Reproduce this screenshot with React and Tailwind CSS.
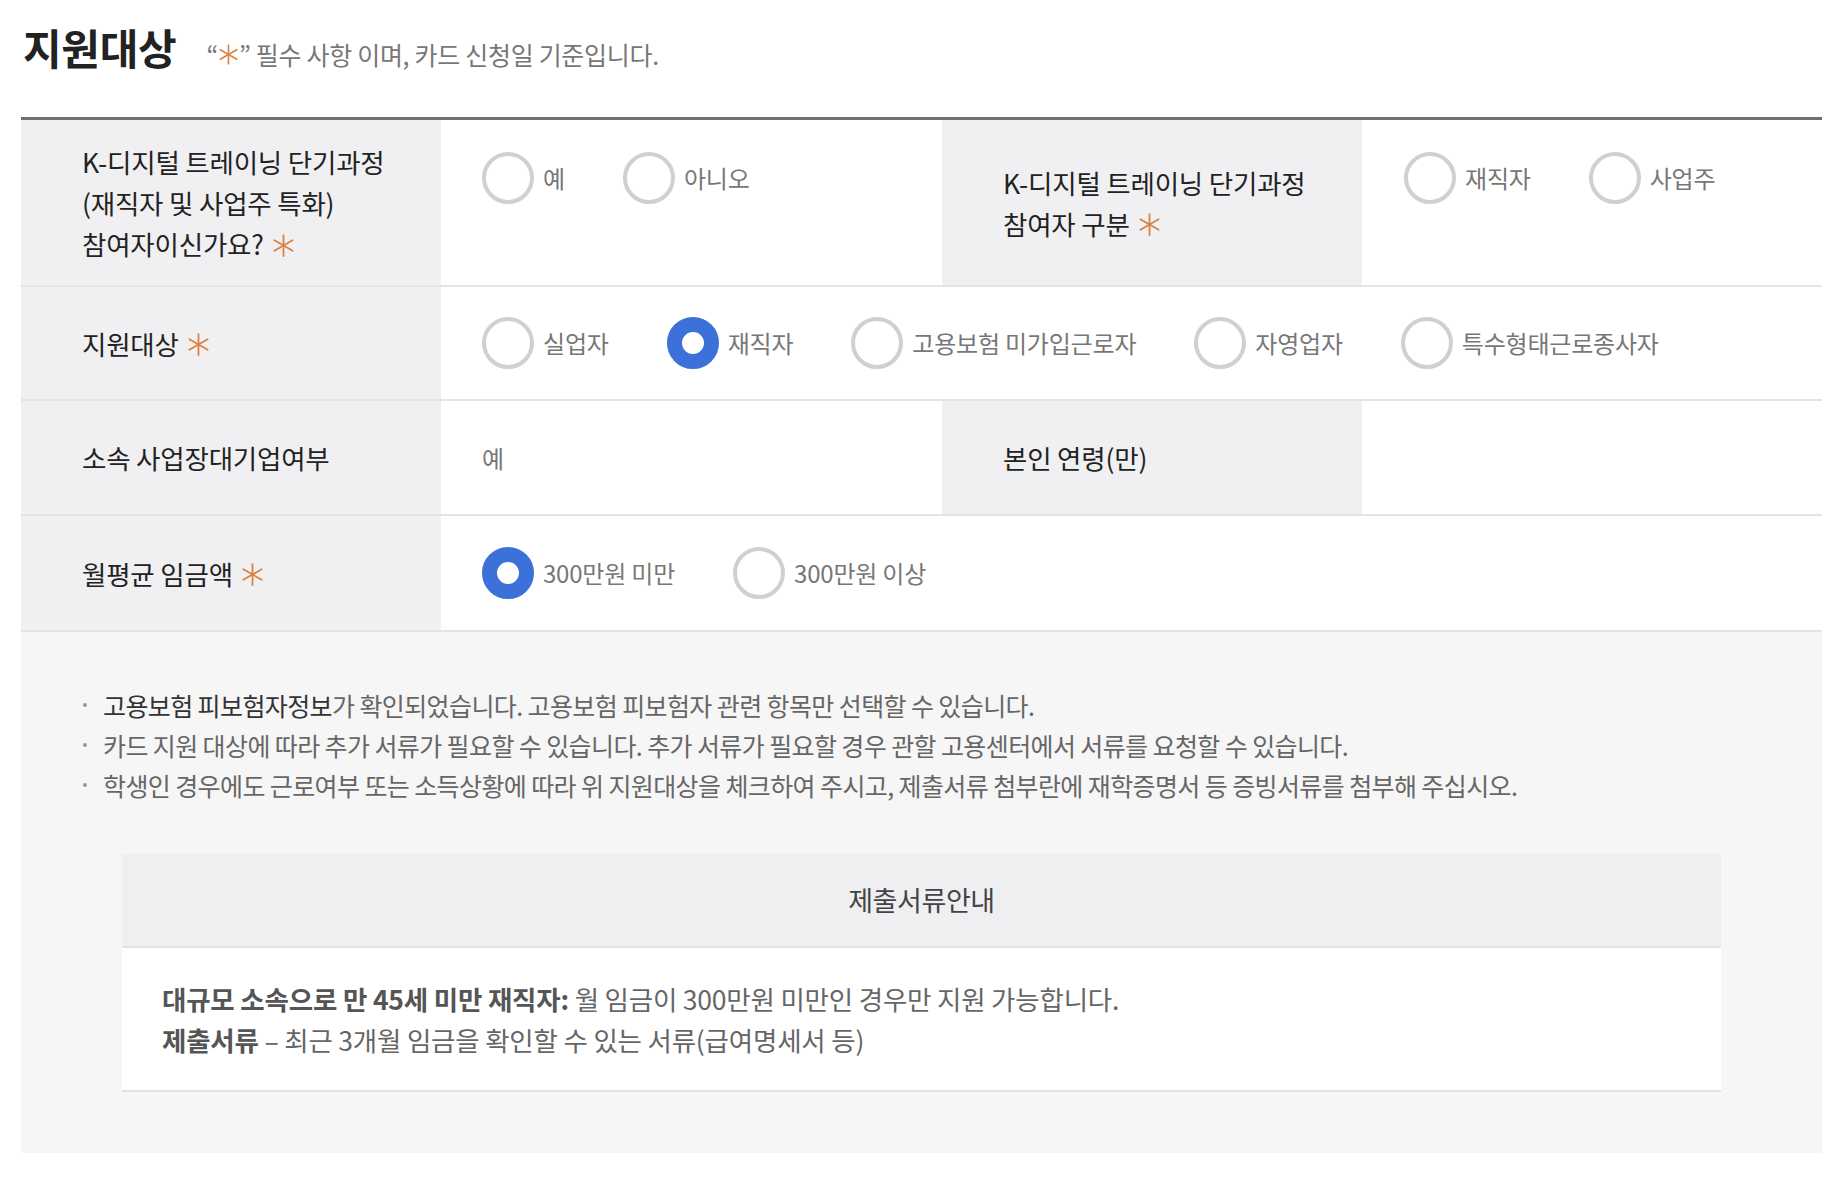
import React from 'react';

// six-spoke asterisk used for required fields
function Star({ size = 20, className = '' }) {
  return (
    <svg
      width={size}
      height={size * 1.1}
      viewBox="0 0 20 22"
      className={className}
      fill="none"
      stroke="#d9823f"
      strokeWidth="1.7"
      strokeLinecap="round"
    >
      <line x1="10" y1="1" x2="10" y2="21" />
      <line x1="1.3" y1="6" x2="18.7" y2="16" />
      <line x1="1.3" y1="16" x2="18.7" y2="6" />
    </svg>
  );
}

function Radio({ label, checked, last }) {
  return (
    <label className={`flex items-center gap-[9px] ${last ? '' : 'mr-[58px]'}`}>
      {checked ? (
        <span className="w-[52px] h-[52px] rounded-full border-[15px] border-[#3b71d9] bg-white shrink-0" />
      ) : (
        <span className="w-[52px] h-[52px] rounded-full border-[4px] border-[#d0d0d2] bg-white shrink-0" />
      )}
      <span className="text-[24px] text-[#777] tracking-[-0.2px] whitespace-nowrap">{label}</span>
    </label>
  );
}

function Label({ children }) {
  return (
    <div className="bg-[#f0f0f2] pl-[61px] flex items-center text-[26.5px] leading-[41px] text-[#222] tracking-[-0.2px]">
      <div>{children}</div>
    </div>
  );
}

function Req() {
  return <Star size={21} className="inline-block ml-[9px] align-[-2px]" />;
}

export default function App() {
  return (
    <div className="w-[1842px] min-h-[1177px] bg-white font-['Noto_Sans_CJK_KR','Noto_Sans',sans-serif] pl-[21px] pr-[20px]">
      {/* title */}
      <div className="h-[117px] flex items-baseline pt-[18px]">
        <h2 className="text-[42px] leading-[58px] font-bold text-[#222] tracking-[-0.3px] ml-[2px]">지원대상</h2>
        <p className="ml-[30px] text-[25px] text-[#777] tracking-[-0.3px] flex items-baseline">
          <span>“</span>
          <Star size={19} className="inline-block mx-[1px] self-center" />
          <span>” 필수 사항 이며, 카드 신청일 기준입니다.</span>
        </p>
      </div>

      {/* form table */}
      <div className="border-t-[3px] border-[#707070]">
        <div className="grid grid-cols-[420px_501px_420px_460px] h-[167px] border-b-2 border-[#e4e4e6]">
          <Label>
            K-디지털 트레이닝 단기과정
            <br />
            (재직자 및 사업주 특화)
            <br />
            참여자이신가요?
            <Req />
          </Label>
          <div className="pl-[41px] pt-[32px] flex items-start">
            <Radio label="예" />
            <Radio label="아니오" last />
          </div>
          <Label>
            K-디지털 트레이닝 단기과정
            <br />
            참여자 구분
            <Req />
          </Label>
          <div className="pl-[42px] pt-[32px] flex items-start">
            <Radio label="재직자" />
            <Radio label="사업주" last />
          </div>
        </div>

        <div className="grid grid-cols-[420px_1381px] h-[114px] border-b-2 border-[#e4e4e6]">
          <Label>
            지원대상
            <Req />
          </Label>
          <div className="pl-[41px] flex items-center">
            <Radio label="실업자" />
            <Radio label="재직자" checked />
            <Radio label="고용보험 미가입근로자" />
            <Radio label="자영업자" />
            <Radio label="특수형태근로종사자" last />
          </div>
        </div>

        <div className="grid grid-cols-[420px_501px_420px_460px] h-[115px] border-b-2 border-[#e4e4e6]">
          <Label>소속 사업장대기업여부</Label>
          <div className="pl-[41px] flex items-center text-[24px] text-[#777] tracking-[-0.2px]">예</div>
          <Label>본인 연령(만)</Label>
          <div />
        </div>

        <div className="grid grid-cols-[420px_1381px] h-[116px] border-b-2 border-[#e4e4e6]">
          <Label>
            월평균 임금액
            <Req />
          </Label>
          <div className="pl-[41px] flex items-center">
            <Radio label="300만원 미만" checked />
            <Radio label="300만원 이상" last />
          </div>
        </div>
      </div>

      {/* notice area */}
      <div className="bg-[#f6f6f6] pt-[53px] pb-[61px]">
        <ul className="pl-[62px] text-[25px] leading-[40px] text-[#666] tracking-[-0.6px]">
          <li className="flex items-center">
            <span className="w-[4px] h-[4px] rounded-full bg-[#999] mr-[16px] shrink-0" />
            <span>
              <span className="text-[#333]">고용보험 피보험자정보</span>가 확인되었습니다. 고용보험 피보험자 관련 항목만 선택할 수 있습니다.
            </span>
          </li>
          <li className="flex items-center">
            <span className="w-[4px] h-[4px] rounded-full bg-[#999] mr-[16px] shrink-0" />
            <span>카드 지원 대상에 따라 추가 서류가 필요할 수 있습니다. 추가 서류가 필요할 경우 관할 고용센터에서 서류를 요청할 수 있습니다.</span>
          </li>
          <li className="flex items-center">
            <span className="w-[4px] h-[4px] rounded-full bg-[#999] mr-[16px] shrink-0" />
            <span>학생인 경우에도 근로여부 또는 소득상황에 따라 위 지원대상을 체크하여 주시고, 제출서류 첨부란에 재학증명서 등 증빙서류를 첨부해 주십시오.</span>
          </li>
        </ul>

        <div className="mx-[101px] mt-[49px]">
          <div className="h-[94px] bg-[#efeff1] border-b-2 border-[#e2e2e4] flex items-center justify-center text-[27px] text-[#444] tracking-[-0.4px]">
            제출서류안내
          </div>
          <div className="bg-white border-b-2 border-[#e2e2e4] py-[30px] pl-[40px] text-[26.5px] leading-[41px] text-[#666] tracking-[-0.2px]">
            <p>
              <b className="font-bold text-[#555]">대규모 소속으로 만 45세 미만 재직자:</b> 월 임금이 300만원 미만인 경우만 지원 가능합니다.
            </p>
            <p>
              <b className="font-bold text-[#555]">제출서류</b> – 최근 3개월 임금을 확인할 수 있는 서류(급여명세서 등)
            </p>
          </div>
        </div>
      </div>
    </div>
  );
}
